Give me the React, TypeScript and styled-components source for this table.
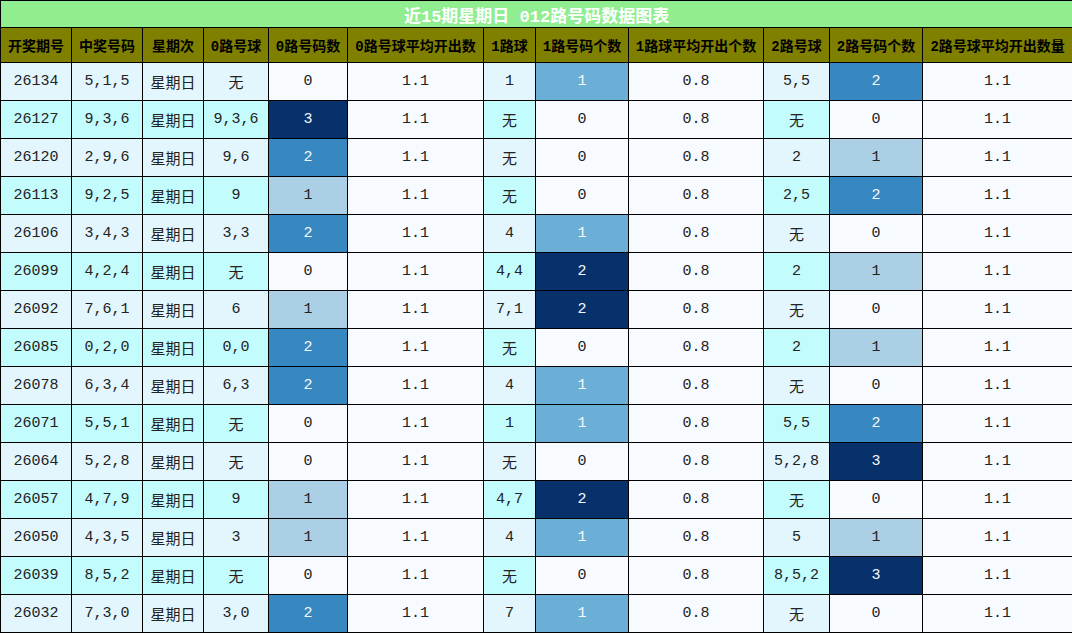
import React from "react";
import styled, { createGlobalStyle } from "styled-components";

const GlobalStyle = createGlobalStyle`
  html, body { margin: 0; padding: 0; background: #ffffff; }
  body { font-family: "Liberation Mono", "Noto Sans CJK SC", monospace; }
`;

const Table = styled.table`
  width: 1072px;
  table-layout: fixed;
  border-collapse: collapse;
  font-family: "Liberation Mono", "Noto Sans CJK SC", monospace;
`;

const TitleCell = styled.th`
  height: 26px;
  padding: 0;
  background: #90ee90;
  color: #ffffff;
  font-size: 17px;
  font-weight: bold;
  text-align: center;
  border: 1px solid #000;
`;

const HeadCell = styled.th`
  height: 34px;
  padding: 0;
  background: #808000;
  color: #000;
  font-size: 14px;
  font-weight: bold;
  text-align: center;
  white-space: nowrap;
  border: 1px solid #000;
`;

type Tone = "plain" | "ball";

const Cell = styled.td<{ $tone?: Tone; $alt?: boolean; $bg?: string; $fg?: string }>`
  height: 37px;
  padding: 0;
  text-align: center;
  font-size: 15px;
  color: ${(p) => p.$fg ?? "#222"};
  background: ${(p) =>
    p.$bg ?? (p.$tone === "ball" ? (p.$alt ? "#c2fcfd" : "#e3f6fd") : "#f7fbff")};
  border: 1px solid #000;
  white-space: nowrap;
`;

const widths = [71, 71, 61, 65, 79, 136, 52, 93, 135, 66, 93, 150];
const headers = [
  "开奖期号",
  "中奖号码",
  "星期次",
  "0路号球",
  "0路号码数",
  "0路号球平均开出数",
  "1路球",
  "1路号码个数",
  "1路球平均开出个数",
  "2路号球",
  "2路号码个数",
  "2路号球平均开出数量",
];

type Row = [string, string, string, number, string, number, string, number];
// issue, numbers, 0-balls, 0-count, 1-balls, 1-count, 2-balls, 2-count
const rows: Row[] = [
  ["26134", "5,1,5", "无", 0, "1", 1, "5,5", 2],
  ["26127", "9,3,6", "9,3,6", 3, "无", 0, "无", 0],
  ["26120", "2,9,6", "9,6", 2, "无", 0, "2", 1],
  ["26113", "9,2,5", "9", 1, "无", 0, "2,5", 2],
  ["26106", "3,4,3", "3,3", 2, "4", 1, "无", 0],
  ["26099", "4,2,4", "无", 0, "4,4", 2, "2", 1],
  ["26092", "7,6,1", "6", 1, "7,1", 2, "无", 0],
  ["26085", "0,2,0", "0,0", 2, "无", 0, "2", 1],
  ["26078", "6,3,4", "6,3", 2, "4", 1, "无", 0],
  ["26071", "5,5,1", "无", 0, "1", 1, "5,5", 2],
  ["26064", "5,2,8", "无", 0, "无", 0, "5,2,8", 3],
  ["26057", "4,7,9", "9", 1, "4,7", 2, "无", 0],
  ["26050", "4,3,5", "3", 1, "4", 1, "5", 1],
  ["26039", "8,5,2", "无", 0, "无", 0, "8,5,2", 3],
  ["26032", "7,3,0", "3,0", 2, "7", 1, "无", 0],
];

const heat = (v: number, max: number): { bg: string; fg: string } => {
  const t = v / max;
  if (t === 0) return { bg: "#f7fbff", fg: "#222" };
  if (t < 0.4) return { bg: "#abd0e6", fg: "#222" };
  if (t < 0.6) return { bg: "#6baed6", fg: "#f4f8fb" };
  if (t < 0.8) return { bg: "#3787c0", fg: "#f4f8fb" };
  return { bg: "#08306b", fg: "#f4f8fb" };
};

const max0 = Math.max(...rows.map((r) => r[3]));
const max1 = Math.max(...rows.map((r) => r[5]));
const max2 = Math.max(...rows.map((r) => r[7]));

const HeatCell: React.FC<{ v: number; max: number }> = ({ v, max }) => {
  const h = heat(v, max);
  return (
    <Cell $bg={h.bg} $fg={h.fg}>
      {v}
    </Cell>
  );
};

export default function App() {
  return (
    <>
      <GlobalStyle />
      <Table>
        <colgroup>
          {widths.map((w, i) => (
            <col key={i} style={{ width: w }} />
          ))}
        </colgroup>
        <thead>
          <tr>
            <TitleCell colSpan={12}>近15期星期日 012路号码数据图表</TitleCell>
          </tr>
          <tr>
            {headers.map((h) => (
              <HeadCell key={h}>{h}</HeadCell>
            ))}
          </tr>
        </thead>
        <tbody>
          {rows.map((r, i) => {
            const alt = i % 2 === 1;
            return (
              <tr key={r[0]}>
                <Cell $tone="ball" $alt={alt}>{r[0]}</Cell>
                <Cell $tone="ball" $alt={alt}>{r[1]}</Cell>
                <Cell $tone="ball" $alt={alt}>星期日</Cell>
                <Cell $tone="ball" $alt={alt}>{r[2]}</Cell>
                <HeatCell v={r[3]} max={max0} />
                <Cell>1.1</Cell>
                <Cell $tone="ball" $alt={alt}>{r[4]}</Cell>
                <HeatCell v={r[5]} max={max1} />
                <Cell>0.8</Cell>
                <Cell $tone="ball" $alt={alt}>{r[6]}</Cell>
                <HeatCell v={r[7]} max={max2} />
                <Cell>1.1</Cell>
              </tr>
            );
          })}
        </tbody>
      </Table>
    </>
  );
}
